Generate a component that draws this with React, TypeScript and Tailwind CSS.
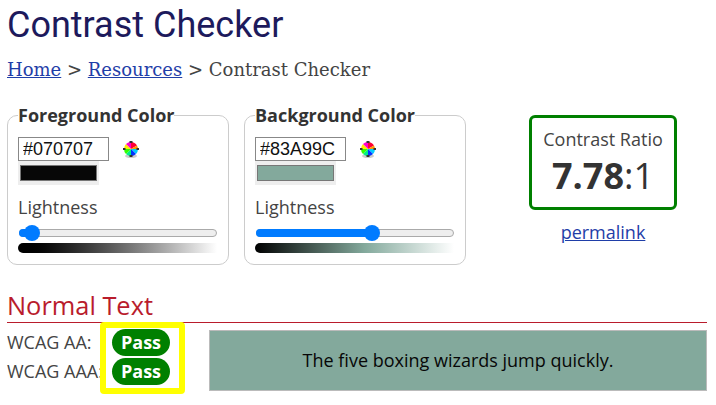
const openSans = { fontFamily: '"Open Sans", sans-serif' }

function ColorWheel() {
  return (
    <svg width="18" height="18" viewBox="0 0 18 18" aria-hidden="true">
      <ellipse cx="9" cy="16" rx="6" ry="2" fill="#ccc" />
      <path d="M9 9V2A7 7 0 0 1 15 5.500Z" fill="#ff0033" />
      <path d="M9 9L15 5.500A7 7 0 0 1 16 9Z" fill="#ff9900" />
      <path d="M9 9H16A7 7 0 0 1 14 14Z" fill="#00ccff" />
      <path d="M9 9L14 14A7 7 0 0 1 9 16Z" fill="#0033ff" />
      <path d="M9 9V16A7 7 0 0 1 4 14Z" fill="#00ee88" />
      <path d="M9 9L4 14A7 7 0 0 1 2 9Z" fill="#33ff00" />
      <path d="M9 9H2A7 7 0 0 1 4 4Z" fill="#ffee00" />
      <path d="M9 9L4 4A7 7 0 0 1 9 2Z" fill="#ff00cc" />
      <path d="M7.500 1h3v2h-3zM7.500 15h3v2h-3zM1 8h2.500v2H1zM14.500 8H17v2h-2.500z" fill="#333" />
    </svg>
  )
}

function ColorCard({
  title,
  hex,
  swatch,
  fill,
  thumb,
  gradient,
}: {
  title: string
  hex: string
  swatch: string
  fill: string
  thumb: string
  gradient: string
}) {
  return (
    <fieldset className="m-0 h-[162px] w-[222px] min-w-0 rounded-[10px] border border-[#ccc] pl-[10px] pr-[11px]">
      <legend className="p-0 text-[18px] leading-[24px] font-bold text-[#333]">{title}</legend>
      <div className="mt-[10px] flex items-center">
        <input
          readOnly
          value={hex}
          className="h-[24px] w-[91px] border border-[#888] pl-1 text-[18px] text-[#111] outline-none"
          style={{ fontFamily: '"Liberation Sans", sans-serif' }}
        />
        <span className="ml-[13px] flex h-[18px] w-[18px]">
          <ColorWheel />
        </span>
      </div>
      <div className="h-[24px] w-[81px] bg-[#eee] px-[2px] pt-[4px]">
        <div className={`h-[16px] w-[77px] border border-[#777] ${swatch}`} />
      </div>
      <p className="mt-[10px] text-[18px] leading-[24px] text-[#444]">Lightness</p>
      <div className="relative mt-[10px] ml-px h-[8px] w-[198px] rounded-full border border-[#aaa] bg-[#eee]">
        <div className={`absolute -top-px -left-px h-[8px] rounded-full bg-[#007bff] ${fill}`} />
        <div className={`absolute -top-[5px] h-[16px] w-[16px] rounded-full bg-[#007bff] ${thumb}`} />
      </div>
      <div className={`mt-[6px] h-[10px] w-[199px] rounded-l-[5px] ${gradient}`} />
    </fieldset>
  )
}

export default function App() {
  return (
    <div className="h-[405px] w-[716px] overflow-hidden bg-white px-[7px]" style={openSans}>
      <h1 className="pt-[3px] text-[36px] leading-[44px] font-normal text-[#1d1a5c]" style={{ fontFamily: 'Roboto, sans-serif' }}>
        Contrast Checker
      </h1>
      <nav className="mt-[10px] text-[18px] leading-[26px] text-[#444]" style={{ fontFamily: '"DejaVu Serif", serif' }}>
        <a className="text-[#1f3ea8] underline">Home</a> &gt; <a className="text-[#1f3ea8] underline">Resources</a> &gt; Contrast Checker
      </nav>

      <div className="mt-[20px] flex items-start">
        <ColorCard
          title="Foreground Color"
          hex="#070707"
          swatch="bg-[#070707]"
          fill="w-[14px]"
          thumb="left-[4px]"
          gradient="bg-gradient-to-r from-[#000] to-[#fff]"
        />
        <div className="ml-[15px]">
          <ColorCard
            title="Background Color"
            hex="#83A99C"
            swatch="bg-[#83a99c]"
            fill="w-[116px]"
            thumb="left-[107px]"
            gradient="bg-[linear-gradient(to_right,#000,#83a99c_55%,#fff)]"
          />
        </div>
        <div className="ml-[63px] flex flex-col items-center pt-[12px]">
          <div className="flex h-[95px] w-[148px] flex-col items-center rounded-[6px] border-[3px] border-[#008000] pt-[9px] text-[#333]">
            <p className="text-[18px] leading-[24px] text-[#444]">Contrast Ratio</p>
            <p className="mt-[3px] text-[36px] leading-[44px] text-[#333]">
              <span className="font-bold">7.78</span>:1
            </p>
          </div>
          <a className="mt-[10px] text-[18px] leading-[24px] text-[#1f3ea8] underline">permalink</a>
        </div>
      </div>

      <h2 className="mt-[24px] w-[700px] border-b border-[#b91c2c] text-[25.4px] leading-[33px] font-normal text-[#b91c2c]">Normal Text</h2>
      <div className="flex">
        <div className="w-[93px] pt-[5px] text-[18px] leading-[29px] whitespace-nowrap text-[#444]">
          <p>WCAG AA:</p>
          <p>WCAG AAA:</p>
        </div>
        <div className="z-10 -mt-[1px] flex h-[72px] w-[85px] flex-col items-start gap-[2px] rounded-[4px] border-[6px] border-[#ffff00] bg-white pt-[1px] pl-[6px]">
          <span className="flex h-[27px] w-[58px] items-center justify-center rounded-full bg-[#008000] text-[18px] font-bold text-white">Pass</span>
          <span className="flex h-[27px] w-[58px] items-center justify-center rounded-full bg-[#008000] text-[18px] font-bold text-white">Pass</span>
        </div>
        <div className="mt-[7px] ml-[24px] flex h-[61px] w-[498px] items-center justify-center border border-[#bbb] bg-[#83a99c] text-[18px] text-[#070707]">
          The five boxing wizards jump quickly.
        </div>
      </div>
    </div>
  )
}
